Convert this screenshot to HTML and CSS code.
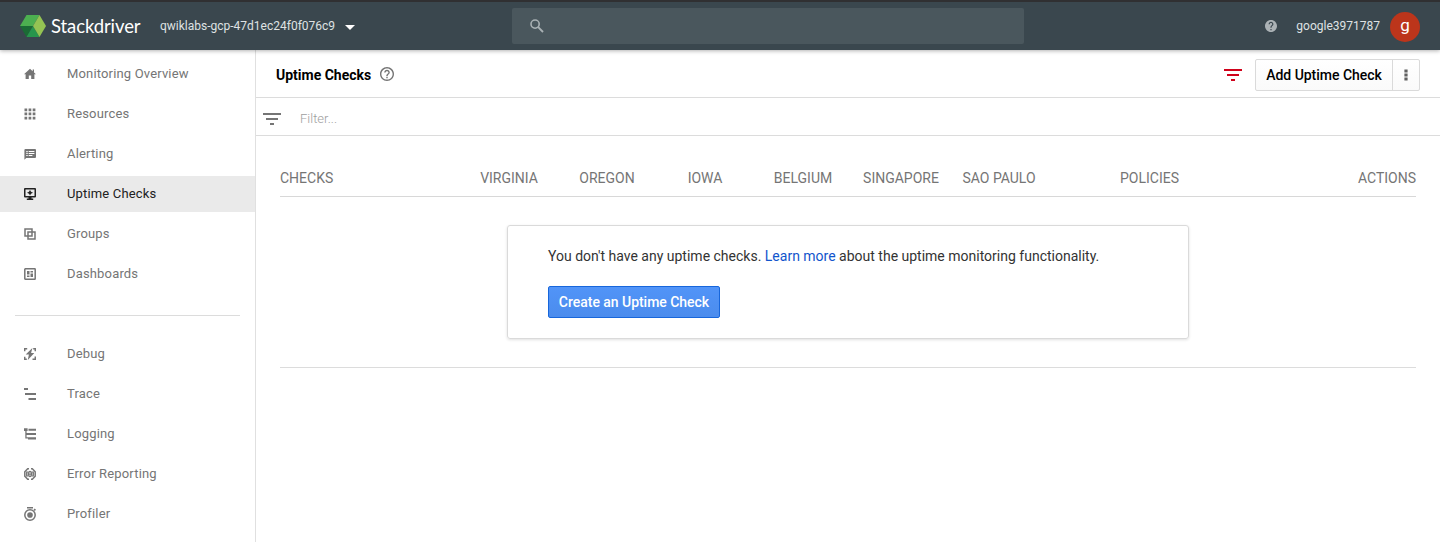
FILE: index.html
```html
<!DOCTYPE html>
<html lang="en">
<head>
<meta charset="utf-8">
<title>Uptime Checks - Stackdriver</title>
<link rel="stylesheet" href="styles.css">
</head>
<body>
<header class="topbar">
  <div class="brand">
    <svg class="logo" width="26" height="22" viewBox="0 0 26 22"><path fill="#4caf50" d="M6.5 0H19.5L13 11H0z"/><path fill="#1b6b35" d="M0 11H13L6.5 22z"/><path fill="#27964c" d="M13 11L19.5 22H6.5z"/><path fill="#94c353" d="M19.5 0L26 11L19.5 22L13 11z"/></svg>
    <span class="brand-name">Stackdriver</span>
  </div>
  <div class="project"><span class="project-name">qwiklabs-gcp-47d1ec24f0f076c9</span><svg width="10" height="5" viewBox="0 0 10 5"><path fill="#fff" d="M0 0H10L5 5z"/></svg></div>
  <div class="search"><svg width="14" height="14" viewBox="0 0 14 14"><circle cx="5.1" cy="5.1" r="4.1" fill="none" stroke="#a9b1b4" stroke-width="1.6"/><path d="M8.2 8.2L13 13" stroke="#a9b1b4" stroke-width="1.9"/></svg></div>
  <div class="account">
    <svg class="account-help" width="12" height="12" viewBox="2 2 20 20"><path fill="#abb2b5" d="M12 2C6.48 2 2 6.48 2 12s4.48 10 10 10 10-4.48 10-10S17.52 2 12 2zm1 17h-2v-2h2v2zm2.07-7.75l-.9.92C13.45 12.9 13 13.5 13 15h-2v-.5c0-1.1.45-2.1 1.17-2.83l1.24-1.26c.37-.36.59-.86.59-1.41 0-1.1-.9-2-2-2s-2 .9-2 2H8c0-2.21 1.79-4 4-4s4 1.79 4 4c0 .88-.36 1.68-.93 2.25z"/></svg>
    <span class="user-name">google3971787</span>
    <span class="avatar">g</span>
  </div>
</header>
<div class="body">
  <nav class="sidebar">
    <a class="item"><svg class="icon" viewBox="0 0 12 12"><path d="M6 .8L0 6.2H1.6V11H4.8V7.5H7.2V11H10.4V6.2H12L10 4.4V1.5H8.7V3.2z"/></svg><span>Monitoring Overview</span></a>
    <a class="item"><svg class="icon" viewBox="0 0 12 12"><path d="M.5.5h2.7v2.7H.5zM4.6.5h2.7v2.7H4.6zM8.7.5h2.7v2.7H8.7zM.5 4.6h2.7v2.7H.5zM4.6 4.6h2.7v2.7H4.6zM8.7 4.6h2.7v2.7H8.7zM.5 8.7h2.7v2.7H.5zM4.6 8.7h2.7v2.7H4.6zM8.7 8.7h2.7v2.7H8.7z"/></svg><span>Resources</span></a>
    <a class="item"><svg class="icon" viewBox="0 0 12 12"><path fill-rule="evenodd" d="M1.5 1H11a1 1 0 0 1 1 1V9a1 1 0 0 1-1 1H2.2L.4 11.8V2.1A1.1 1.1 0 0 1 1.5 1zM2.3 3H3.7V4.2H2.3zM4.7 3H10.4V4.1H4.7zM2.3 5H3.7V6.1H2.3zM4.7 5H10.4V6.1H4.7zM2.3 7H3.7V8.1H2.3zM4.7 7H8.4V8.1H4.7z"/></svg><span>Alerting</span></a>
    <a class="item active"><svg class="icon" viewBox="0 0 12 12"><path fill-rule="evenodd" d="M1 0H11a1 1 0 0 1 1 1V8.500a1 1 0 0 1-1 1H7.500V10.600H9.200V12H2.800V10.600H4.500V9.500H1a1 1 0 0 1-1-1V1a1 1 0 0 1 1-1zM1.500 1.500V8H10.500V1.500z"/><path d="M6 2.100L7 3.800 9 4.800 7 5.800 6 7.500 5 5.800 3 4.800 5 3.800z"/></svg><span>Uptime Checks</span></a>
    <a class="item"><svg class="icon" viewBox="0 0 12 12"><path class="line" d="M3.500 8H1V1H8V3.200M4 4H8V8H4zM8 4H11V11H4V8"/></svg><span>Groups</span></a>
    <a class="item"><svg class="icon" viewBox="0 0 12 12"><rect class="line" x=".8" y=".8" width="10.400" height="10.400" rx=".5"/><path d="M3 3H5.500V6.500H3zM6.500 3H9V4.500H6.500zM3 7.500H5.500V9H3zM6.500 5.500H9V9H6.500z"/></svg><span>Dashboards</span></a>
    <hr class="divider">
    <a class="item"><svg class="icon" viewBox="0 0 12 12"><path d="M8.400 0L1.700 6.600H4.900L3.800 12L10.300 5.100H7.100z"/><path class="line" d="M.7 3.200V.8H3.200M9.200.8H11.300V3.200M.7 8.700V11.200H2.800M8.500 11.200H11.300V8.500"/></svg><span>Debug</span></a>
    <a class="item"><svg class="icon" viewBox="0 0 12 12"><path d="M0 0H4V2H0zM1 5H12V7H1zM4.500 10H12V12H4.500z"/></svg><span>Trace</span></a>
    <a class="item"><svg class="icon" viewBox="0 0 12 12"><path d="M0 .2H3.600V3H2.600V5H12V7H2.600V9.200H12V11.500H4V10.600H1.300V3H0zM4.500.8H12V2.800H4.500z"/></svg><span>Logging</span></a>
    <a class="item"><svg class="icon" viewBox="0 0 12 12"><path class="line" d="M5 .8H3.700L.8 3.700V8.300L3.700 11.200H5M7 .8H8.300L11.200 3.700V8.300L8.300 11.200H7M3.500 3.500L2.800 4.500V7.500L3.500 8.500M8.500 3.500L9.200 4.500V7.500L8.500 8.500"/><path fill-rule="evenodd" d="M6 2.700A2 2 0 0 1 8 4.700V7.300A2 2 0 0 1 4 7.300V4.700A2 2 0 0 1 6 2.700zM5.200 4.500V5.400H6.800V4.500zM5.200 6.700V7.500H6.800V6.700z"/></svg><span>Error Reporting</span></a>
    <a class="item"><svg class="icon profiler" viewBox="0 0 12 14"><circle class="line" cx="6" cy="8" r="5.200"/><circle cx="6" cy="8" r="2.800"/><path d="M3 0H9V1.400H3zM10.700 1.500L12 2.700 10.800 4 9.500 2.800z"/></svg><span>Profiler</span></a>
  </nav>
  <main class="main">
    <div class="titlebar">
      <h1 class="title">Uptime Checks</h1>
      <svg class="help" width="14" height="14" viewBox="2 2 20 20"><path fill="#757575" d="M11 18h2v-2h-2v2zm1-16C6.480 2 2 6.480 2 12s4.480 10 10 10 10-4.480 10-10S17.520 2 12 2zm0 18c-4.410 0-8-3.590-8-8s3.590-8 8-8 8 3.590 8 8-3.590 8-8 8zm0-14c-2.210 0-4 1.790-4 4h2c0-1.100.9-2 2-2s2 .9 2 2c0 2-3 1.750-3 5h2c0-2.250 3-2.500 3-5 0-2.210-1.790-4-4-4z"/></svg>
      <svg class="filter-toggle" width="18" height="12" viewBox="0 0 18 12"><path fill="#d0021b" d="M0 0H18V2H0zM3 5H15V7H3zM7 10H11V12H7z"/></svg>
      <div class="split-button"><span class="add">Add Uptime Check</span><span class="more"><svg width="4" height="12" viewBox="0 0 4 12"><path fill="#616161" d="M.4 .4h3.200v3H.4zM.4 4.500h3.200v3H.4zM.4 8.600h3.200v3H.4z"/></svg></span></div>
    </div>
    <div class="filterbar"><svg width="18" height="12" viewBox="0 0 18 12"><path fill="#757575" d="M0 0H18V2H0zM3 5H15V7H3zM7 10H11V12H7z"/></svg><span class="placeholder">Filter...</span></div>
    <section class="checks">
      <div class="columns"><span class="first">CHECKS</span><span>VIRGINIA</span><span>OREGON</span><span>IOWA</span><span>BELGIUM</span><span>SINGAPORE</span><span>SAO PAULO</span><span>POLICIES</span><span class="last">ACTIONS</span></div>
      <div class="empty">
        <div class="card"><p class="message">You don't have any uptime checks. <a class="link">Learn more</a> about the uptime monitoring functionality.</p><span class="create">Create an Uptime Check</span></div>
      </div>
    </section>
  </main>
</div>
</body>
</html>
```

FILE: styles.css
```css
* { box-sizing: border-box; }
body { margin: 0; height: 542px; overflow: hidden; display: flex; flex-direction: column; background: #fff; font-family: Roboto, "Liberation Sans", sans-serif; }
svg { display: block; flex: none; }
.topbar { height: 50px; flex: none; display: grid; grid-template-columns: 160px 352px 512px 1fr; align-items: center; border-top: 2px solid #303032; background: #3a474e; box-shadow: 0 1px 4px rgba(0,0,0,.3); position: relative; z-index: 1; color: #fff; }
.brand { display: flex; align-items: center; gap: 5px; padding-left: 20px; }
.brand-name { font-family: Lato, Roboto, sans-serif; font-size: 18.5px; font-weight: 400; line-height: 22px; letter-spacing: -.1px; white-space: nowrap; }
.project { display: flex; align-items: center; gap: 10px; }
.project svg { margin-top: 2px; }
.project-name { font-size: 12px; line-height: 18px; color: #dfe2e3; }
.search { height: 36px; background: #4a575d; border-radius: 2px; display: flex; align-items: center; padding-left: 18px; }
.account { display: flex; align-items: center; justify-content: flex-end; padding: 2px 20px 0 0; }
.account-help { margin-top: -2px; }
.user-name { font-size: 12px; line-height: 18px; color: #dfe2e3; margin: -3px 10px 0 19px; }
.avatar { width: 30px; height: 30px; border-radius: 50%; background: #bc351b; font-size: 17px; line-height: 27px; text-align: center; }
.body { flex: 1; display: flex; min-height: 0; }
.sidebar { width: 256px; flex: none; border-right: 1px solid #e0e0e0; padding-top: 6px; display: flex; flex-direction: column; gap: 4px; }
.item { height: 36px; flex: none; display: flex; align-items: center; gap: 31px; padding-left: 24px; color: #757575; font-size: 13px; letter-spacing: .16px; }
.item.active { background: #eaeaea; color: #212121; }
.icon { width: 12px; height: 12px; fill: currentColor; }
.profiler { height: 14px; }
.line { fill: none; stroke: currentColor; stroke-width: 1.5; }
.item span { line-height: 20px; padding-bottom: 1px; }
.divider { width: 225px; height: 1px; border: 0; background: #dcdcdc; margin: 19px 15px 16px; flex: none; }
.main { flex: 1; min-width: 0; }
.titlebar { height: 48px; display: flex; align-items: center; border-bottom: 1px solid #dcdcdc; padding: 3px 20px 0; }
.title { font-size: 14px; font-weight: 700; line-height: 20px; margin: 0; color: #000; }
.help { margin: -3px 0 0 9px; }
.filter-toggle { margin-left: auto; }
.split-button { height: 32px; display: flex; margin-left: 13px; border: 1px solid #dadada; border-radius: 2px; background: linear-gradient(#fff, #fafafa); }
.add { width: 137px; border-right: 1px solid #dadada; font-size: 14px; font-weight: 500; line-height: 31px; letter-spacing: -.03px; text-align: center; color: #000; }
.more { width: 26px; display: flex; align-items: center; justify-content: center; }
.filterbar { height: 38px; display: flex; align-items: center; gap: 19px; padding: 4px 7px 0; border-bottom: 1px solid #dcdcdc; }
.placeholder { font-size: 13px; font-weight: 300; color: #9e9e9e; }
.checks { padding: 24px 24px 0; }
.columns { height: 37px; display: grid; grid-template-columns: 180px repeat(6, 98px) 203px 1fr; align-items: center; text-align: center; border-bottom: 1px solid #d8d8d8; font-size: 14px; line-height: 18px; color: #757575; }
.columns .first { text-align: left; }
.columns .last { text-align: right; }
.empty { height: 171px; padding-top: 28px; border-bottom: 1px solid #dcdcdc; }
.card { width: 682px; height: 114px; margin: 0 auto; border: 1px solid #dadada; border-radius: 3px; padding: 20px 40px; box-shadow: 0 1px 3px rgba(0,0,0,.12); }
.message { margin: 0 0 20px; font-size: 14px; line-height: 20px; color: #333; white-space: nowrap; }
.link { color: #1155cc; }
.create { display: block; width: 172px; height: 32px; border: 1px solid #1766db; border-radius: 2px; background: linear-gradient(#5194f8, #4b8ced); color: #fff; font-size: 14px; font-weight: 500; line-height: 30px; letter-spacing: -.03px; text-align: center; }
```
